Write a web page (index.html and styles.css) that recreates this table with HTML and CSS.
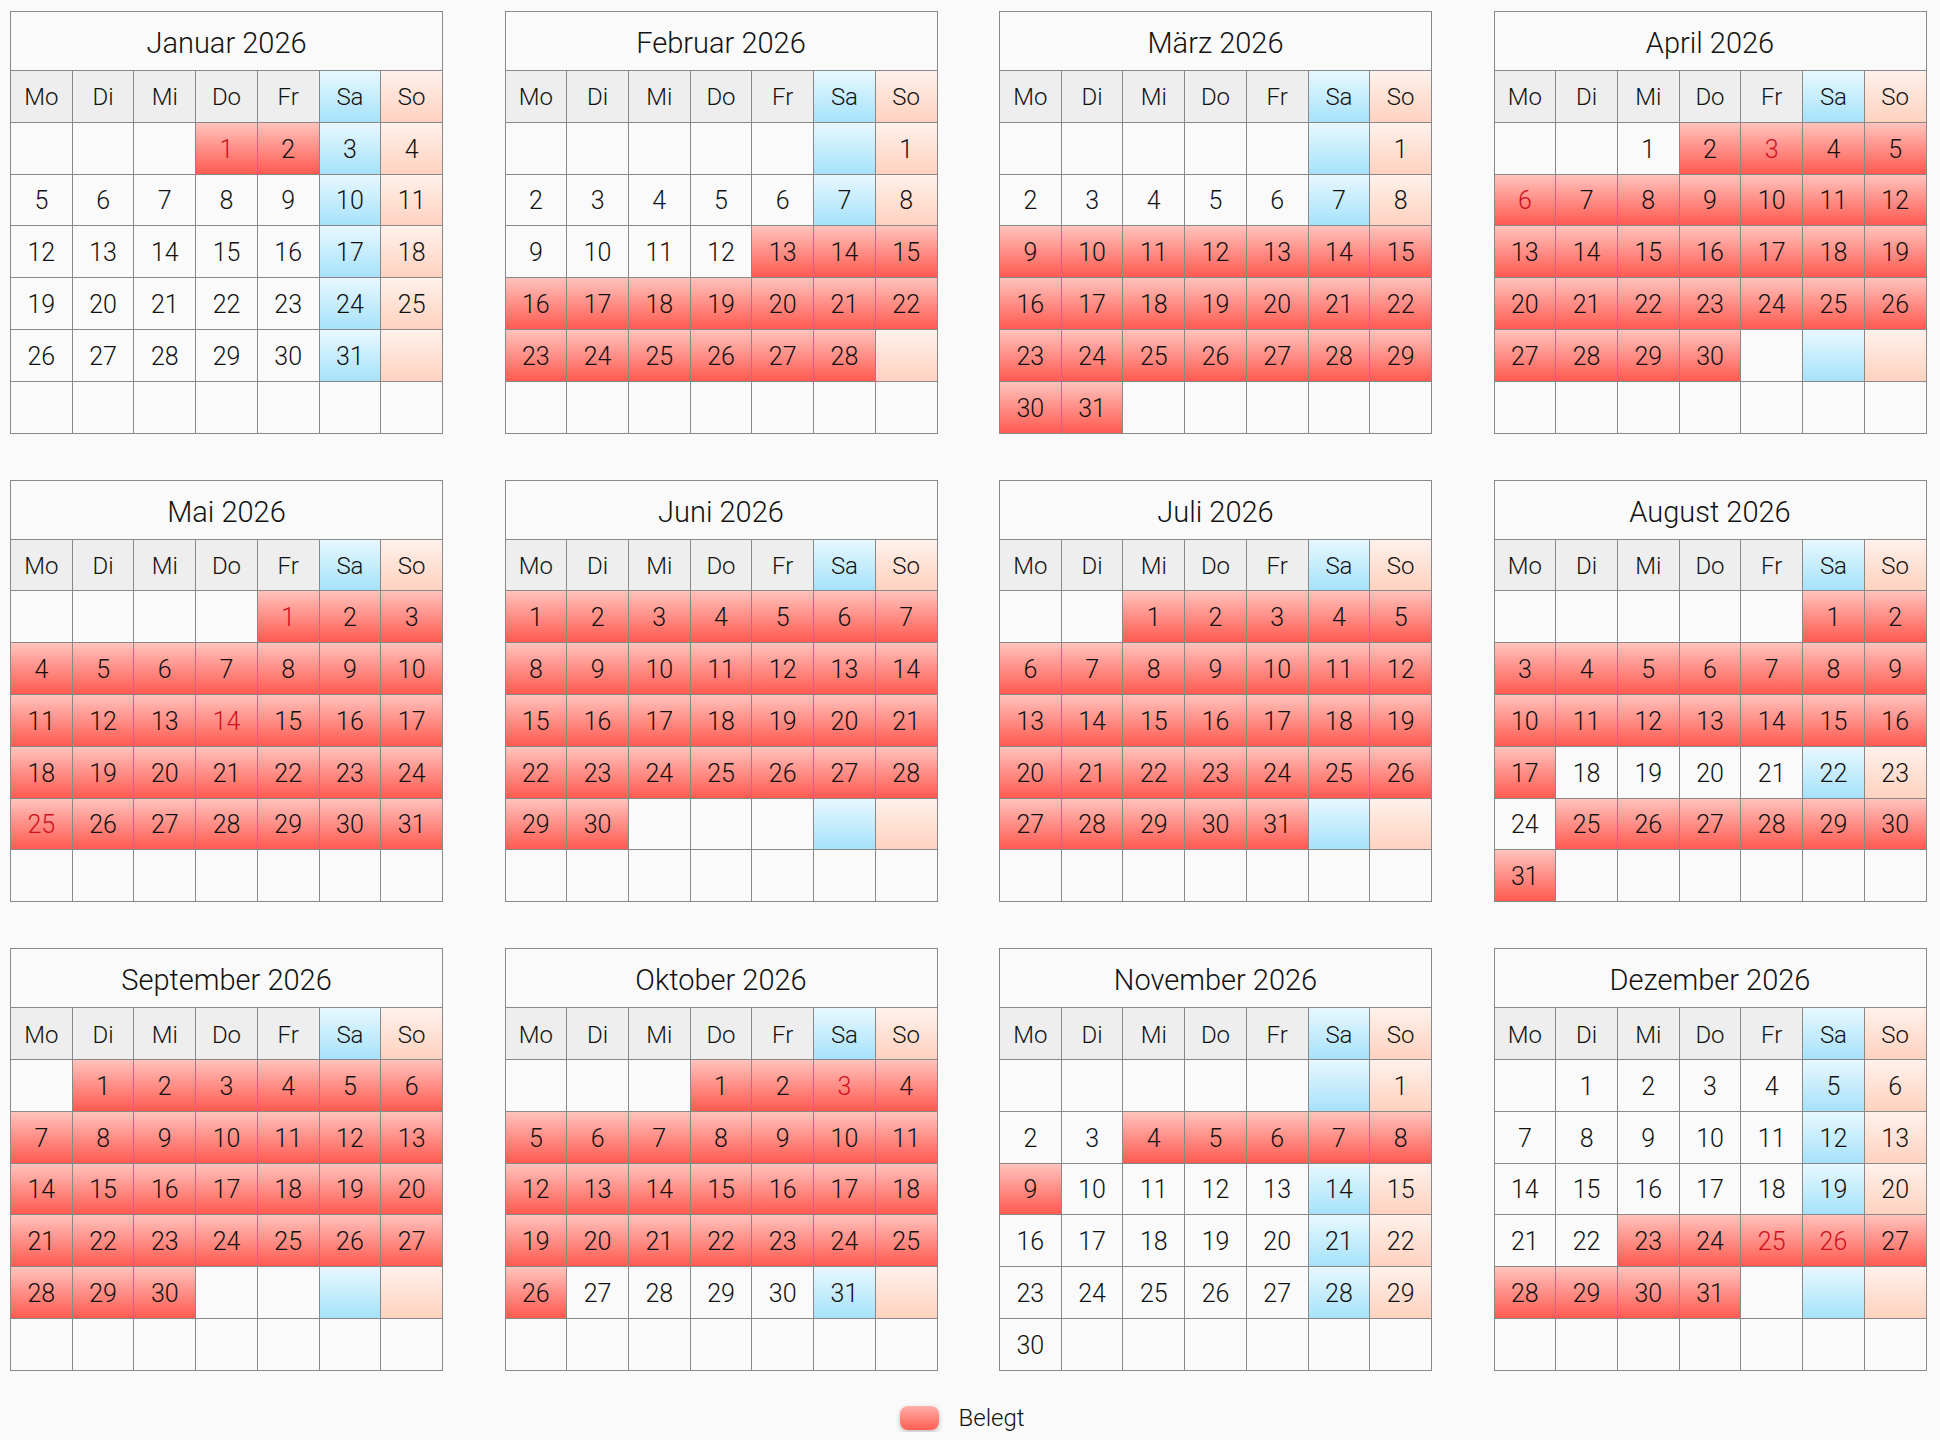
FILE: index.html
```html
<!DOCTYPE html>
<html lang="de">
<head>
<meta charset="utf-8">
<title>Belegungskalender 2026</title>
<link rel="stylesheet" href="styles.css">
</head>
<body>
<div class="page">
<div class="year">

<div class="month">
<div class="title">Januar 2026</div>
<div class="c hd">Mo</div><div class="c hd">Di</div><div class="c hd">Mi</div><div class="c hd">Do</div><div class="c hd">Fr</div><div class="c hd sa">Sa</div><div class="c hd so">So</div>
<div class="c"></div><div class="c"></div><div class="c"></div><div class="c r h">1</div><div class="c r">2</div><div class="c sa">3</div><div class="c so">4</div>
<div class="c">5</div><div class="c">6</div><div class="c">7</div><div class="c">8</div><div class="c">9</div><div class="c sa">10</div><div class="c so">11</div>
<div class="c">12</div><div class="c">13</div><div class="c">14</div><div class="c">15</div><div class="c">16</div><div class="c sa">17</div><div class="c so">18</div>
<div class="c">19</div><div class="c">20</div><div class="c">21</div><div class="c">22</div><div class="c">23</div><div class="c sa">24</div><div class="c so">25</div>
<div class="c">26</div><div class="c">27</div><div class="c">28</div><div class="c">29</div><div class="c">30</div><div class="c sa">31</div><div class="c so"></div>
<div class="c"></div><div class="c"></div><div class="c"></div><div class="c"></div><div class="c"></div><div class="c"></div><div class="c"></div>
</div>

<div class="month">
<div class="title">Februar 2026</div>
<div class="c hd">Mo</div><div class="c hd">Di</div><div class="c hd">Mi</div><div class="c hd">Do</div><div class="c hd">Fr</div><div class="c hd sa">Sa</div><div class="c hd so">So</div>
<div class="c"></div><div class="c"></div><div class="c"></div><div class="c"></div><div class="c"></div><div class="c sa"></div><div class="c so">1</div>
<div class="c">2</div><div class="c">3</div><div class="c">4</div><div class="c">5</div><div class="c">6</div><div class="c sa">7</div><div class="c so">8</div>
<div class="c">9</div><div class="c">10</div><div class="c">11</div><div class="c">12</div><div class="c r">13</div><div class="c r">14</div><div class="c r">15</div>
<div class="c r">16</div><div class="c r">17</div><div class="c r">18</div><div class="c r">19</div><div class="c r">20</div><div class="c r">21</div><div class="c r">22</div>
<div class="c r">23</div><div class="c r">24</div><div class="c r">25</div><div class="c r">26</div><div class="c r">27</div><div class="c r">28</div><div class="c so"></div>
<div class="c"></div><div class="c"></div><div class="c"></div><div class="c"></div><div class="c"></div><div class="c"></div><div class="c"></div>
</div>

<div class="month">
<div class="title">März 2026</div>
<div class="c hd">Mo</div><div class="c hd">Di</div><div class="c hd">Mi</div><div class="c hd">Do</div><div class="c hd">Fr</div><div class="c hd sa">Sa</div><div class="c hd so">So</div>
<div class="c"></div><div class="c"></div><div class="c"></div><div class="c"></div><div class="c"></div><div class="c sa"></div><div class="c so">1</div>
<div class="c">2</div><div class="c">3</div><div class="c">4</div><div class="c">5</div><div class="c">6</div><div class="c sa">7</div><div class="c so">8</div>
<div class="c r">9</div><div class="c r">10</div><div class="c r">11</div><div class="c r">12</div><div class="c r">13</div><div class="c r">14</div><div class="c r">15</div>
<div class="c r">16</div><div class="c r">17</div><div class="c r">18</div><div class="c r">19</div><div class="c r">20</div><div class="c r">21</div><div class="c r">22</div>
<div class="c r">23</div><div class="c r">24</div><div class="c r">25</div><div class="c r">26</div><div class="c r">27</div><div class="c r">28</div><div class="c r">29</div>
<div class="c r">30</div><div class="c r">31</div><div class="c"></div><div class="c"></div><div class="c"></div><div class="c"></div><div class="c"></div>
</div>

<div class="month">
<div class="title">April 2026</div>
<div class="c hd">Mo</div><div class="c hd">Di</div><div class="c hd">Mi</div><div class="c hd">Do</div><div class="c hd">Fr</div><div class="c hd sa">Sa</div><div class="c hd so">So</div>
<div class="c"></div><div class="c"></div><div class="c">1</div><div class="c r">2</div><div class="c r h">3</div><div class="c r">4</div><div class="c r">5</div>
<div class="c r h">6</div><div class="c r">7</div><div class="c r">8</div><div class="c r">9</div><div class="c r">10</div><div class="c r">11</div><div class="c r">12</div>
<div class="c r">13</div><div class="c r">14</div><div class="c r">15</div><div class="c r">16</div><div class="c r">17</div><div class="c r">18</div><div class="c r">19</div>
<div class="c r">20</div><div class="c r">21</div><div class="c r">22</div><div class="c r">23</div><div class="c r">24</div><div class="c r">25</div><div class="c r">26</div>
<div class="c r">27</div><div class="c r">28</div><div class="c r">29</div><div class="c r">30</div><div class="c"></div><div class="c sa"></div><div class="c so"></div>
<div class="c"></div><div class="c"></div><div class="c"></div><div class="c"></div><div class="c"></div><div class="c"></div><div class="c"></div>
</div>

<div class="month">
<div class="title">Mai 2026</div>
<div class="c hd">Mo</div><div class="c hd">Di</div><div class="c hd">Mi</div><div class="c hd">Do</div><div class="c hd">Fr</div><div class="c hd sa">Sa</div><div class="c hd so">So</div>
<div class="c"></div><div class="c"></div><div class="c"></div><div class="c"></div><div class="c r h">1</div><div class="c r">2</div><div class="c r">3</div>
<div class="c r">4</div><div class="c r">5</div><div class="c r">6</div><div class="c r">7</div><div class="c r">8</div><div class="c r">9</div><div class="c r">10</div>
<div class="c r">11</div><div class="c r">12</div><div class="c r">13</div><div class="c r h">14</div><div class="c r">15</div><div class="c r">16</div><div class="c r">17</div>
<div class="c r">18</div><div class="c r">19</div><div class="c r">20</div><div class="c r">21</div><div class="c r">22</div><div class="c r">23</div><div class="c r">24</div>
<div class="c r h">25</div><div class="c r">26</div><div class="c r">27</div><div class="c r">28</div><div class="c r">29</div><div class="c r">30</div><div class="c r">31</div>
<div class="c"></div><div class="c"></div><div class="c"></div><div class="c"></div><div class="c"></div><div class="c"></div><div class="c"></div>
</div>

<div class="month">
<div class="title">Juni 2026</div>
<div class="c hd">Mo</div><div class="c hd">Di</div><div class="c hd">Mi</div><div class="c hd">Do</div><div class="c hd">Fr</div><div class="c hd sa">Sa</div><div class="c hd so">So</div>
<div class="c r">1</div><div class="c r">2</div><div class="c r">3</div><div class="c r">4</div><div class="c r">5</div><div class="c r">6</div><div class="c r">7</div>
<div class="c r">8</div><div class="c r">9</div><div class="c r">10</div><div class="c r">11</div><div class="c r">12</div><div class="c r">13</div><div class="c r">14</div>
<div class="c r">15</div><div class="c r">16</div><div class="c r">17</div><div class="c r">18</div><div class="c r">19</div><div class="c r">20</div><div class="c r">21</div>
<div class="c r">22</div><div class="c r">23</div><div class="c r">24</div><div class="c r">25</div><div class="c r">26</div><div class="c r">27</div><div class="c r">28</div>
<div class="c r">29</div><div class="c r">30</div><div class="c"></div><div class="c"></div><div class="c"></div><div class="c sa"></div><div class="c so"></div>
<div class="c"></div><div class="c"></div><div class="c"></div><div class="c"></div><div class="c"></div><div class="c"></div><div class="c"></div>
</div>

<div class="month">
<div class="title">Juli 2026</div>
<div class="c hd">Mo</div><div class="c hd">Di</div><div class="c hd">Mi</div><div class="c hd">Do</div><div class="c hd">Fr</div><div class="c hd sa">Sa</div><div class="c hd so">So</div>
<div class="c"></div><div class="c"></div><div class="c r">1</div><div class="c r">2</div><div class="c r">3</div><div class="c r">4</div><div class="c r">5</div>
<div class="c r">6</div><div class="c r">7</div><div class="c r">8</div><div class="c r">9</div><div class="c r">10</div><div class="c r">11</div><div class="c r">12</div>
<div class="c r">13</div><div class="c r">14</div><div class="c r">15</div><div class="c r">16</div><div class="c r">17</div><div class="c r">18</div><div class="c r">19</div>
<div class="c r">20</div><div class="c r">21</div><div class="c r">22</div><div class="c r">23</div><div class="c r">24</div><div class="c r">25</div><div class="c r">26</div>
<div class="c r">27</div><div class="c r">28</div><div class="c r">29</div><div class="c r">30</div><div class="c r">31</div><div class="c sa"></div><div class="c so"></div>
<div class="c"></div><div class="c"></div><div class="c"></div><div class="c"></div><div class="c"></div><div class="c"></div><div class="c"></div>
</div>

<div class="month">
<div class="title">August 2026</div>
<div class="c hd">Mo</div><div class="c hd">Di</div><div class="c hd">Mi</div><div class="c hd">Do</div><div class="c hd">Fr</div><div class="c hd sa">Sa</div><div class="c hd so">So</div>
<div class="c"></div><div class="c"></div><div class="c"></div><div class="c"></div><div class="c"></div><div class="c r">1</div><div class="c r">2</div>
<div class="c r">3</div><div class="c r">4</div><div class="c r">5</div><div class="c r">6</div><div class="c r">7</div><div class="c r">8</div><div class="c r">9</div>
<div class="c r">10</div><div class="c r">11</div><div class="c r">12</div><div class="c r">13</div><div class="c r">14</div><div class="c r">15</div><div class="c r">16</div>
<div class="c r">17</div><div class="c">18</div><div class="c">19</div><div class="c">20</div><div class="c">21</div><div class="c sa">22</div><div class="c so">23</div>
<div class="c">24</div><div class="c r">25</div><div class="c r">26</div><div class="c r">27</div><div class="c r">28</div><div class="c r">29</div><div class="c r">30</div>
<div class="c r">31</div><div class="c"></div><div class="c"></div><div class="c"></div><div class="c"></div><div class="c"></div><div class="c"></div>
</div>

<div class="month">
<div class="title">September 2026</div>
<div class="c hd">Mo</div><div class="c hd">Di</div><div class="c hd">Mi</div><div class="c hd">Do</div><div class="c hd">Fr</div><div class="c hd sa">Sa</div><div class="c hd so">So</div>
<div class="c"></div><div class="c r">1</div><div class="c r">2</div><div class="c r">3</div><div class="c r">4</div><div class="c r">5</div><div class="c r">6</div>
<div class="c r">7</div><div class="c r">8</div><div class="c r">9</div><div class="c r">10</div><div class="c r">11</div><div class="c r">12</div><div class="c r">13</div>
<div class="c r">14</div><div class="c r">15</div><div class="c r">16</div><div class="c r">17</div><div class="c r">18</div><div class="c r">19</div><div class="c r">20</div>
<div class="c r">21</div><div class="c r">22</div><div class="c r">23</div><div class="c r">24</div><div class="c r">25</div><div class="c r">26</div><div class="c r">27</div>
<div class="c r">28</div><div class="c r">29</div><div class="c r">30</div><div class="c"></div><div class="c"></div><div class="c sa"></div><div class="c so"></div>
<div class="c"></div><div class="c"></div><div class="c"></div><div class="c"></div><div class="c"></div><div class="c"></div><div class="c"></div>
</div>

<div class="month">
<div class="title">Oktober 2026</div>
<div class="c hd">Mo</div><div class="c hd">Di</div><div class="c hd">Mi</div><div class="c hd">Do</div><div class="c hd">Fr</div><div class="c hd sa">Sa</div><div class="c hd so">So</div>
<div class="c"></div><div class="c"></div><div class="c"></div><div class="c r">1</div><div class="c r">2</div><div class="c r h">3</div><div class="c r">4</div>
<div class="c r">5</div><div class="c r">6</div><div class="c r">7</div><div class="c r">8</div><div class="c r">9</div><div class="c r">10</div><div class="c r">11</div>
<div class="c r">12</div><div class="c r">13</div><div class="c r">14</div><div class="c r">15</div><div class="c r">16</div><div class="c r">17</div><div class="c r">18</div>
<div class="c r">19</div><div class="c r">20</div><div class="c r">21</div><div class="c r">22</div><div class="c r">23</div><div class="c r">24</div><div class="c r">25</div>
<div class="c r">26</div><div class="c">27</div><div class="c">28</div><div class="c">29</div><div class="c">30</div><div class="c sa">31</div><div class="c so"></div>
<div class="c"></div><div class="c"></div><div class="c"></div><div class="c"></div><div class="c"></div><div class="c"></div><div class="c"></div>
</div>

<div class="month">
<div class="title">November 2026</div>
<div class="c hd">Mo</div><div class="c hd">Di</div><div class="c hd">Mi</div><div class="c hd">Do</div><div class="c hd">Fr</div><div class="c hd sa">Sa</div><div class="c hd so">So</div>
<div class="c"></div><div class="c"></div><div class="c"></div><div class="c"></div><div class="c"></div><div class="c sa"></div><div class="c so">1</div>
<div class="c">2</div><div class="c">3</div><div class="c r">4</div><div class="c r">5</div><div class="c r">6</div><div class="c r">7</div><div class="c r">8</div>
<div class="c r">9</div><div class="c">10</div><div class="c">11</div><div class="c">12</div><div class="c">13</div><div class="c sa">14</div><div class="c so">15</div>
<div class="c">16</div><div class="c">17</div><div class="c">18</div><div class="c">19</div><div class="c">20</div><div class="c sa">21</div><div class="c so">22</div>
<div class="c">23</div><div class="c">24</div><div class="c">25</div><div class="c">26</div><div class="c">27</div><div class="c sa">28</div><div class="c so">29</div>
<div class="c">30</div><div class="c"></div><div class="c"></div><div class="c"></div><div class="c"></div><div class="c"></div><div class="c"></div>
</div>

<div class="month">
<div class="title">Dezember 2026</div>
<div class="c hd">Mo</div><div class="c hd">Di</div><div class="c hd">Mi</div><div class="c hd">Do</div><div class="c hd">Fr</div><div class="c hd sa">Sa</div><div class="c hd so">So</div>
<div class="c"></div><div class="c">1</div><div class="c">2</div><div class="c">3</div><div class="c">4</div><div class="c sa">5</div><div class="c so">6</div>
<div class="c">7</div><div class="c">8</div><div class="c">9</div><div class="c">10</div><div class="c">11</div><div class="c sa">12</div><div class="c so">13</div>
<div class="c">14</div><div class="c">15</div><div class="c">16</div><div class="c">17</div><div class="c">18</div><div class="c sa">19</div><div class="c so">20</div>
<div class="c">21</div><div class="c">22</div><div class="c r">23</div><div class="c r">24</div><div class="c r h">25</div><div class="c r h">26</div><div class="c r">27</div>
<div class="c r">28</div><div class="c r">29</div><div class="c r">30</div><div class="c r">31</div><div class="c"></div><div class="c sa"></div><div class="c so"></div>
<div class="c"></div><div class="c"></div><div class="c"></div><div class="c"></div><div class="c"></div><div class="c"></div><div class="c"></div>
</div>

</div>
<div class="legend"><span class="swatch"></span><span class="legend-label">Belegt</span></div>
</div>
</body>
</html>
```
FILE: styles.css
```css
* { box-sizing: border-box; }
html, body {
  margin: 0;
  background: #fafafa;
}
body {
  font-family: Roboto, "Helvetica Neue", "Liberation Sans", sans-serif;
  font-weight: 300;
  color: #111;
}
.page {
  padding: 11px 0 0 10px;
}
.year {
  display: grid;
  grid-template-columns: repeat(4, 433px);
  column-gap: 61.5px;
  row-gap: 46px;
}
.month {
  display: grid;
  grid-template-columns: repeat(7, 1fr);
  grid-template-rows: 59px;
  grid-auto-rows: 51.8px;
  border-left: 1px solid #888;
  border-top: 1px solid #888;
}
.title {
  grid-column: 1 / -1;
  border-right: 1px solid #888;
  border-bottom: 1px solid #888;
  display: flex;
  align-items: center;
  justify-content: center;
  font-size: 29px;
  padding-top: 4px;
}
.c {
  border-right: 1px solid #888;
  border-bottom: 1px solid #888;
  display: flex;
  align-items: center;
  justify-content: center;
  font-size: 25px;
  padding-top: 2px;
}
.hd {
  background: #eeeeee;
  font-size: 24px;
}
.sa {
  background: linear-gradient(#e8f8ff, #a6e2fa);
}
.so {
  background: linear-gradient(#fff1eb, #ffd2bf);
}
.r {
  background: linear-gradient(#ffc3bd, #ff5a50);
}
.h {
  color: #d0101c;
}
.legend {
  display: flex;
  justify-content: center;
  align-items: center;
  gap: 20px;
  margin-top: 33px;
  padding-right: 26px;
  font-size: 24px;
}
.swatch {
  width: 39px;
  height: 24px;
  border-radius: 8px;
  background: linear-gradient(#ffb0a8, #ff5d53);
  box-shadow: 0 2px 5px rgba(0, 0, 0, 0.25);
}
```
